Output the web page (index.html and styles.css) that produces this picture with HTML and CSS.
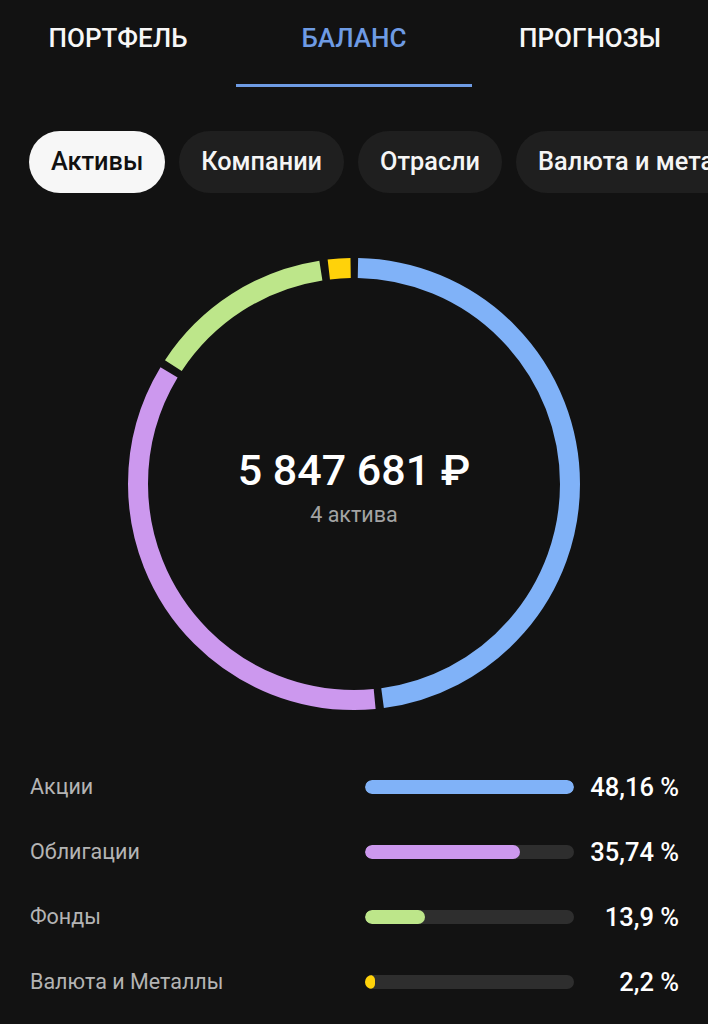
FILE: index.html
```html
<!DOCTYPE html>
<html lang="ru">
<head>
<meta charset="utf-8">
<title>Баланс</title>
<link rel="stylesheet" href="styles.css">
</head>
<body>
<div class="screen">
  <nav class="tabs">
    <div class="tab"><span class="tab-label">ПОРТФЕЛЬ</span><span class="tab-line"></span></div>
    <div class="tab tab-active"><span class="tab-label">БАЛАНС</span><span class="tab-line"></span></div>
    <div class="tab"><span class="tab-label">ПРОГНОЗЫ</span><span class="tab-line"></span></div>
  </nav>

  <div class="chips">
    <span class="chip chip-active">Активы</span>
    <span class="chip">Компании</span>
    <span class="chip">Отрасли</span>
    <span class="chip">Валюта и металлы</span>
  </div>

  <section class="donut">
    <svg class="donut-svg" width="452" height="452" viewBox="0 0 452 452">
      <g transform="rotate(-90 226 226)" fill="none" stroke-width="20">
        <circle cx="226" cy="226" r="216" stroke="#80b2f8" stroke-dasharray="645.6 1357.17" stroke-dashoffset="-4"/>
        <circle cx="226" cy="226" r="216" stroke="#cc98ee" stroke-dasharray="477.1 1357.17" stroke-dashoffset="-657.6"/>
        <circle cx="226" cy="226" r="216" stroke="#bde68a" stroke-dasharray="180.6 1357.17" stroke-dashoffset="-1142.7"/>
        <circle cx="226" cy="226" r="216" stroke="#ffd20a" stroke-dasharray="21.9 1357.17" stroke-dashoffset="-1331.3"/>
      </g>
    </svg>
    <div class="donut-center">
      <div class="donut-amount">5 847 681 ₽</div>
      <div class="donut-sub">4 актива</div>
    </div>
  </section>

  <section class="legend">
    <div class="legend-row">
      <span class="legend-label">Акции</span>
      <span class="bar"><span class="bar-fill fill-blue" style="width:100%"></span></span>
      <span class="legend-value">48,16 %</span>
    </div>
    <div class="legend-row">
      <span class="legend-label">Облигации</span>
      <span class="bar"><span class="bar-fill fill-purple" style="width:74.2%"></span></span>
      <span class="legend-value">35,74 %</span>
    </div>
    <div class="legend-row">
      <span class="legend-label">Фонды</span>
      <span class="bar"><span class="bar-fill fill-green" style="width:28.9%"></span></span>
      <span class="legend-value">13,9 %</span>
    </div>
    <div class="legend-row">
      <span class="legend-label">Валюта и Металлы</span>
      <span class="bar"><span class="bar-fill fill-yellow" style="width:4.6%"></span></span>
      <span class="legend-value">2,2 %</span>
    </div>
  </section>
</div>
</body>
</html>
```

FILE: styles.css
```css
html, body {
  margin: 0;
  padding: 0;
  background: #121212;
}

body {
  font-family: Roboto, "Noto Sans", "Liberation Sans", sans-serif;
  color: #f5f5f5;
}

.screen {
  width: 708px;
  height: 1024px;
  overflow: hidden;
}

/* Tabs */
.tabs {
  display: grid;
  grid-template-columns: repeat(3, 1fr);
}

.tab {
  display: flex;
  flex-direction: column;
  align-items: center;
}

.tab-label {
  height: 76px;
  line-height: 76px;
  font-size: 26px;
  font-weight: 500;
  color: #f7f7f7;
}

.tab-line {
  margin-top: 8px;
  height: 3px;
  width: 100%;
}

.tab-active .tab-label {
  color: #6e9be4;
}

.tab-active .tab-line {
  background: #6e9be4;
}

/* Chips */
.chips {
  display: flex;
  gap: 14px;
  margin-top: 44px;
  padding-left: 29px;
  white-space: nowrap;
  overflow: hidden;
}

.chip {
  flex: none;
  height: 62px;
  line-height: 62px;
  padding: 0 22px;
  border-radius: 31px;
  background: #1f1f1f;
  color: #f5f5f5;
  font-size: 25.3px;
  font-weight: 500;
}

.chip-active {
  background: #f7f7f7;
  color: #111111;
}

/* Donut */
.donut {
  display: grid;
  justify-content: center;
  margin-top: 65px;
}

.donut-svg,
.donut-center {
  grid-area: 1 / 1;
}

.donut-svg {
  display: block;
}

.donut-center {
  display: flex;
  flex-direction: column;
  align-items: center;
  justify-content: center;
  gap: 7px;
  padding-top: 7px;
}

.donut-amount {
  font-size: 43px;
  line-height: 48px;
  font-weight: 500;
  color: #ffffff;
}

.donut-sub {
  font-size: 21.5px;
  line-height: 28px;
  color: #a3a3a3;
}

/* Legend */
.legend {
  margin-top: 44px;
  padding: 0 29px 0 30px;
}

.legend-row {
  display: grid;
  grid-template-columns: 1fr 209px 105px;
  align-items: center;
  height: 65px;
}

.legend-label {
  font-size: 21.5px;
  color: #b4b4b4;
}

.bar {
  display: block;
  height: 14px;
  border-radius: 7px;
  background: #2e2e2e;
  overflow: hidden;
}

.bar-fill {
  display: block;
  height: 100%;
  border-radius: 7px;
}

.fill-blue { background: #80b2f8; }
.fill-purple { background: #cc98ee; }
.fill-green { background: #bde68a; }
.fill-yellow { background: #ffd20a; }

.legend-value {
  text-align: right;
  font-size: 25.5px;
  font-weight: 500;
  color: #ffffff;
}
```
